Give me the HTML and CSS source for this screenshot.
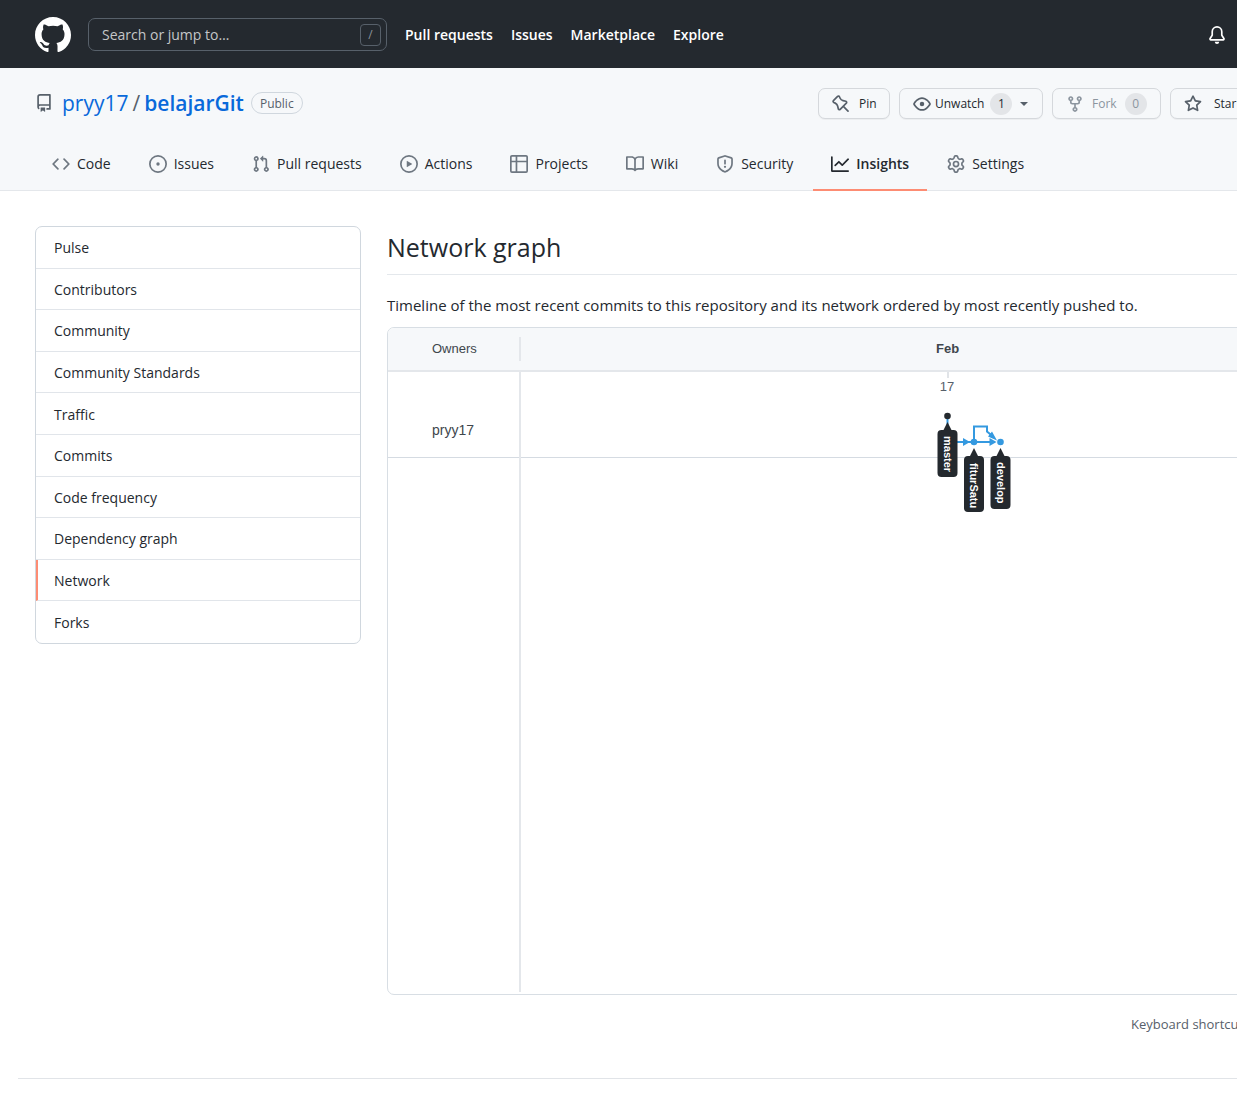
FILE: index.html
```html
<!DOCTYPE html>
<html lang="en">
<head>
<meta charset="utf-8">
<title>Network Graph · pryy17/belajarGit</title>
<link rel="stylesheet" href="styles.css">
</head>
<body>
<div class="app">
  <header class="topbar">
    <a class="logo" href="#" aria-label="Homepage"><svg width="36" height="36" viewBox="0 0 16 16"><path d="M8 0C3.58 0 0 3.58 0 8c0 3.54 2.29 6.53 5.47 7.59.4.07.55-.17.55-.38 0-.19-.01-.82-.01-1.49-2.01.37-2.53-.49-2.69-.94-.09-.23-.48-.94-.82-1.13-.28-.15-.68-.52-.01-.53.63-.01 1.08.58 1.23.82.72 1.21 1.87.87 2.33.66.07-.52.28-.87.51-1.07-1.78-.2-3.64-.89-3.64-3.95 0-.87.31-1.59.82-2.15-.08-.2-.36-1.02.08-2.12 0 0 .67-.21 2.2.82.64-.18 1.32-.27 2-.27.68 0 1.36.09 2 .27 1.53-1.04 2.2-.82 2.2-.82.44 1.1.16 1.92.08 2.12.51.56.82 1.27.82 2.15 0 3.07-1.87 3.75-3.65 3.95.29.25.54.73.54 1.48 0 1.07-.01 1.93-.01 2.2 0 .21.15.46.55.38A8.013 8.013 0 0016 8c0-4.42-3.58-8-8-8z"/></svg></a>
    <div class="search">
      <input type="text" placeholder="Search or jump to…" aria-label="Search or jump to">
      <kbd>/</kbd>
    </div>
    <nav class="topnav" aria-label="Global">
      <a href="#">Pull requests</a>
      <a href="#">Issues</a>
      <a href="#">Marketplace</a>
      <a href="#">Explore</a>
    </nav>
    <a class="bell" href="#" aria-label="Notifications"><svg width="18" height="18" viewBox="0 0 16 16"><path d="M8 16a2 2 0 001.985-1.75c.017-.137-.097-.25-.235-.25h-3.5c-.138 0-.252.113-.235.25A2 2 0 008 16z"/><path fill-rule="evenodd" d="M8 1.5A3.500 3.500 0 004.500 5v2.947c0 .346-.102.683-.294.970l-1.703 2.556a.018.018 0 00-.003.010l.001.006c0 .002.002.004.004.006a.017.017 0 00.006.004l.007.001h10.964l.007-.001a.016.016 0 00.006-.004.016.016 0 00.004-.006l.001-.007a.017.017 0 00-.003-.010l-1.703-2.554a1.750 1.750 0 01-.294-.970V5A3.500 3.500 0 008 1.500zM3 5a5 5 0 0110 0v2.947c0 .050.015.098.042.139l1.703 2.555A1.518 1.518 0 0113.482 13H2.518a1.518 1.518 0 01-1.263-2.360l1.703-2.554A.250.250 0 003 7.947V5z"/></svg></a>
  </header>

  <div class="repohead">
    <div class="titlerow">
      <h1 class="title">
        <svg width="18" height="18" viewBox="0 0 16 16"><path fill-rule="evenodd" d="M2 2.500A2.500 2.500 0 014.500 0h8.750a.750.750 0 01.750.750v12.500a.750.750 0 01-.750.750h-2.500a.750.750 0 110-1.500h1.750v-2h-8a1 1 0 00-.714 1.700.750.750 0 01-1.072 1.050A2.495 2.495 0 012 11.500v-9zm10.500-1V9h-8c-.356 0-.694.074-1 .208V2.500a1 1 0 011-1h8zM5 12.250v3.250a.250.250 0 00.400.200l1.450-1.087a.250.250 0 01.300 0L8.600 15.700a.250.250 0 00.400-.200v-3.250a.250.250 0 00-.250-.250h-3.500a.250.250 0 00-.250.250z"/></svg>
        <a href="#">pryy17</a><span class="slash">/</span><a class="repo" href="#">belajarGit</a>
        <span class="label">Public</span>
      </h1>
      <div class="actions">
        <button class="btn pin" type="button"><svg width="18" height="18" viewBox="0 0 16 16"><path fill-rule="evenodd" d="M4.456.734a1.750 1.750 0 012.826.504l.613 1.327a3.081 3.081 0 002.084 1.707l2.454.584c1.332.317 1.800 1.972.832 2.940L11.060 10l3.720 3.720a.750.750 0 11-1.061 1.060L10 11.060l-2.204 2.205c-.968.968-2.623.500-2.940-.832l-.584-2.454a3.081 3.081 0 00-1.707-2.084l-1.327-.613a1.750 1.750 0 01-.504-2.826L4.456.734zM5.920 1.866a.250.250 0 00-.404-.072L1.794 5.516a.250.250 0 00.072.404l1.328.613A4.582 4.582 0 015.730 9.630l.584 2.454a.250.250 0 00.420.120l5.470-5.470a.250.250 0 00-.120-.420L9.630 5.730a4.581 4.581 0 01-3.098-2.537L5.920 1.866z"/></svg>Pin</button>
        <button class="btn watch" type="button"><svg width="18" height="18" viewBox="0 0 16 16"><path fill-rule="evenodd" d="M1.679 7.932c.412-.621 1.242-1.750 2.366-2.717C5.175 4.242 6.527 3.500 8 3.500c1.473 0 2.824.742 3.955 1.715 1.124.967 1.954 2.096 2.366 2.717a.119.119 0 010 .136c-.412.621-1.242 1.750-2.366 2.717C10.825 11.758 9.473 12.500 8 12.500c-1.473 0-2.824-.742-3.955-1.715C2.920 9.818 2.090 8.690 1.679 8.068a.119.119 0 010-.136zM8 2c-1.981 0-3.670.992-4.933 2.078C1.797 5.169.880 6.423.430 7.100a1.619 1.619 0 000 1.798c.450.678 1.367 1.932 2.637 3.024C4.329 13.008 6.019 14 8 14c1.981 0 3.670-.992 4.933-2.078 1.270-1.091 2.187-2.345 2.637-3.023a1.619 1.619 0 000-1.798c-.450-.678-1.367-1.932-2.637-3.023C11.671 2.992 9.981 2 8 2zm0 8a2 2 0 100-4 2 2 0 000 4z"/></svg>Unwatch<span class="count">1</span><i class="caret"></i></button>
        <button class="btn fork" type="button" disabled><svg width="18" height="18" viewBox="0 0 16 16"><path fill-rule="evenodd" d="M5 3.250a.750.750 0 11-1.500 0 .750.750 0 011.500 0zm0 2.122a2.250 2.250 0 10-1.500 0v.878A2.250 2.250 0 005.750 8.500h1.500v2.128a2.251 2.251 0 101.500 0V8.500h1.500a2.250 2.250 0 002.250-2.250v-.878a2.250 2.250 0 10-1.500 0v.878a.750.750 0 01-.750.750h-4.500A.750.750 0 015 6.250v-.878zm3.750 7.378a.750.750 0 11-1.500 0 .750.750 0 011.500 0zm3-8.750a.750.750 0 100-1.500.750.750 0 000 1.500z"/></svg>Fork<span class="count">0</span></button>
        <button class="btn star" type="button"><svg width="18" height="18" viewBox="0 0 16 16"><path fill-rule="evenodd" d="M8 .250a.750.750 0 01.673.418l1.882 3.815 4.210.612a.750.750 0 01.416 1.279l-3.046 2.970.719 4.192a.750.750 0 01-1.088.791L8 12.347l-3.766 1.980a.750.750 0 01-1.088-.790l.720-4.194L.818 6.374a.750.750 0 01.416-1.280l4.210-.611L7.327.668A.750.750 0 018 .250zm0 2.445L6.615 5.500a.750.750 0 01-.564.410l-3.097.450 2.240 2.184a.750.750 0 01.216.664l-.528 3.084 2.769-1.456a.750.750 0 01.698 0l2.770 1.456-.530-3.084a.750.750 0 01.216-.664l2.240-2.183-3.096-.450a.750.750 0 01-.564-.410L8 2.694v.001z"/></svg>Star</button>
      </div>
    </div>
    <nav class="tabs" aria-label="Repository">
      <a href="#"><svg width="18" height="18" viewBox="0 0 16 16"><path fill-rule="evenodd" d="M4.720 3.220a.750.750 0 011.060 1.060L2.060 8l3.720 3.720a.750.750 0 11-1.060 1.060L.470 8.530a.750.750 0 010-1.060l4.250-4.250zm6.560 0a.750.750 0 10-1.060 1.060L13.940 8l-3.720 3.720a.750.750 0 101.060 1.060l4.250-4.250a.750.750 0 000-1.060l-4.250-4.250z"/></svg>Code</a>
      <a href="#"><svg width="18" height="18" viewBox="0 0 16 16"><path d="M8 9.500a1.500 1.500 0 100-3 1.500 1.500 0 000 3z"/><path fill-rule="evenodd" d="M8 0a8 8 0 100 16A8 8 0 008 0zM1.500 8a6.500 6.500 0 1113 0 6.500 6.500 0 01-13 0z"/></svg>Issues</a>
      <a href="#"><svg width="18" height="18" viewBox="0 0 16 16"><path fill-rule="evenodd" d="M7.177 3.073L9.573.677A.250.250 0 0110 .854v4.792a.250.250 0 01-.427.177L7.177 3.427a.250.250 0 010-.354zM3.750 2.500a.750.750 0 100 1.500.750.750 0 000-1.500zm-2.250.750a2.250 2.250 0 113 2.122v5.256a2.251 2.251 0 11-1.500 0V5.372A2.250 2.250 0 011.500 3.250zM11 2.500h-1V4h1a1 1 0 011 1v5.628a2.251 2.251 0 101.500 0V5A2.500 2.500 0 0011 2.500zm1 10.250a.750.750 0 111.500 0 .750.750 0 01-1.500 0zM3.750 12a.750.750 0 100 1.500.750.750 0 000-1.500z"/></svg>Pull requests</a>
      <a href="#"><svg width="18" height="18" viewBox="0 0 16 16"><path fill-rule="evenodd" d="M1.500 8a6.500 6.500 0 1113 0 6.500 6.500 0 01-13 0zM8 0a8 8 0 100 16A8 8 0 008 0zM6.379 5.227A.250.250 0 006 5.442v5.117a.250.250 0 00.379.214l4.264-2.559a.250.250 0 000-.428L6.379 5.227z"/></svg>Actions</a>
      <a href="#"><svg width="18" height="18" viewBox="0 0 16 16"><path fill-rule="evenodd" d="M0 1.750C0 .784.784 0 1.750 0h12.500C15.216 0 16 .784 16 1.750v12.500A1.750 1.750 0 0114.250 16H1.750A1.750 1.750 0 010 14.250V1.750zM1.500 6.500v7.750c0 .138.112.250.250.250H5v-8H1.500zM5 5H1.500V1.750a.250.250 0 01.250-.250H5V5zm1.500 1.500v8h7.750a.250.250 0 00.250-.250V6.500h-8zm8-1.500h-8V1.500h7.750a.250.250 0 01.250.250V5z"/></svg>Projects</a>
      <a href="#"><svg width="18" height="18" viewBox="0 0 16 16"><path fill-rule="evenodd" d="M0 1.750A.750.750 0 01.750 1h4.253c1.227 0 2.317.590 3 1.501A3.744 3.744 0 0111.006 1h4.245a.750.750 0 01.750.750v10.500a.750.750 0 01-.750.750h-4.507a2.250 2.250 0 00-1.591.659l-.622.621a.750.750 0 01-1.060 0l-.622-.621A2.250 2.250 0 005.258 13H.750a.750.750 0 01-.750-.750V1.750zm8.755 3a2.250 2.250 0 012.250-2.250H14.500v9h-3.757c-.710 0-1.400.201-1.992.572l.004-7.322zm-1.504 7.324l.004-5.073-.002-2.253A2.250 2.250 0 005.003 2.500H1.500v9h3.757a3.750 3.750 0 011.994.574z"/></svg>Wiki</a>
      <a href="#"><svg width="18" height="18" viewBox="0 0 16 16"><path fill-rule="evenodd" d="M7.467.133a1.750 1.750 0 011.066 0l5.250 1.680A1.750 1.750 0 0115 3.480V7c0 1.566-.320 3.182-1.303 4.682-.983 1.498-2.585 2.813-5.032 3.855a1.700 1.700 0 01-1.330 0c-2.447-1.042-4.049-2.357-5.032-3.855C1.320 10.182 1 8.566 1 7V3.480a1.750 1.750 0 011.217-1.667l5.250-1.680zm.610 1.429a.250.250 0 00-.153 0l-5.250 1.680a.250.250 0 00-.174.238V7c0 1.358.275 2.666 1.057 3.860.784 1.194 2.121 2.340 4.366 3.297a.200.200 0 00.154 0c2.245-.956 3.582-2.104 4.366-3.298C13.225 9.666 13.500 8.360 13.500 7V3.480a.250.250 0 00-.174-.237l-5.250-1.680zM9 10.500a1 1 0 11-2 0 1 1 0 012 0zm-.250-5.750a.750.750 0 10-1.500 0v3a.750.750 0 001.500 0v-3z"/></svg>Security</a>
      <a class="current" href="#" aria-current="page"><svg width="18" height="18" viewBox="0 0 16 16"><path fill-rule="evenodd" d="M1.500 1.750a.750.750 0 00-1.500 0v12.500c0 .414.336.750.750.750h14.500a.750.750 0 000-1.500H1.500V1.750zm14.280 2.530a.750.750 0 00-1.060-1.060L10 7.940 7.530 5.470a.750.750 0 00-1.060 0L3.220 8.720a.750.750 0 001.060 1.060L7 7.060l2.470 2.470a.750.750 0 001.060 0l5.250-5.250z"/></svg>Insights</a>
      <a href="#"><svg width="18" height="18" viewBox="0 0 16 16"><path fill-rule="evenodd" d="M7.429 1.525a6.593 6.593 0 011.142 0c.036.003.108.036.137.146l.289 1.105c.147.560.550.967.997 1.189.174.086.341.183.501.290.417.278.970.423 1.530.270l1.102-.303c.110-.030.175.016.195.046.219.310.410.641.573.989.014.031.022.110-.059.190l-.815.806c-.411.406-.562.957-.530 1.456a4.588 4.588 0 010 .582c-.032.499.119 1.050.530 1.456l.815.806c.080.080.073.159.059.190a6.494 6.494 0 01-.573.990c-.020.029-.086.074-.195.045l-1.103-.303c-.559-.153-1.112-.008-1.529.270-.160.107-.327.204-.500.290-.449.222-.851.628-.998 1.189l-.289 1.105c-.029.110-.101.143-.137.146a6.613 6.613 0 01-1.142 0c-.036-.003-.108-.037-.137-.146l-.289-1.105c-.147-.560-.550-.967-.997-1.189a4.502 4.502 0 01-.501-.290c-.417-.278-.970-.423-1.530-.270l-1.102.303c-.110.030-.175-.016-.195-.046a6.492 6.492 0 01-.573-.989c-.014-.031-.022-.110.059-.190l.815-.806c.411-.406.562-.957.530-1.456a4.587 4.587 0 010-.582c.032-.499-.119-1.050-.530-1.456l-.815-.806c-.080-.080-.073-.159-.059-.190a6.440 6.440 0 01.573-.990c.020-.029.086-.075.195-.045l1.103.303c.559.153 1.112.008 1.529-.270.160-.107.327-.204.500-.290.449-.222.851-.628.998-1.189l.289-1.105c.029-.110.101-.143.137-.146zM8 0c-.236 0-.470.010-.701.030-.743.065-1.290.615-1.458 1.261l-.290 1.106c-.017.066-.078.158-.211.224a5.994 5.994 0 00-.668.386c-.123.082-.233.090-.300.071L3.270 2.776c-.644-.177-1.392.020-1.820.630a7.977 7.977 0 00-.704 1.217c-.315.675-.111 1.422.363 1.891l.815.806c.050.048.098.147.088.294a6.084 6.084 0 000 .772c.010.147-.038.246-.088.294l-.815.806c-.474.469-.678 1.216-.363 1.891.200.428.436.835.704 1.218.428.609 1.176.806 1.820.630l1.103-.303c.066-.019.176-.011.299.071.213.143.436.272.668.386.133.066.194.158.212.224l.289 1.106c.169.646.715 1.196 1.458 1.260a8.094 8.094 0 001.402 0c.743-.064 1.290-.614 1.458-1.260l.290-1.106c.017-.066.078-.158.211-.224a5.980 5.980 0 00.668-.386c.123-.082.233-.090.300-.071l1.102.302c.644.177 1.392-.020 1.820-.630.268-.382.505-.789.704-1.217.315-.675.111-1.422-.364-1.891l-.814-.806c-.050-.048-.098-.147-.088-.294a6.100 6.100 0 000-.772c-.010-.147.039-.246.088-.294l.814-.806c.475-.469.679-1.216.364-1.891a7.992 7.992 0 00-.704-1.218c-.428-.609-1.176-.806-1.820-.630l-1.103.303c-.066.019-.176.011-.299-.071a5.991 5.991 0 00-.668-.386c-.133-.066-.194-.158-.212-.224L10.160 1.290C9.990.645 9.444.095 8.701.031A8.094 8.094 0 008 0zm1.500 8a1.500 1.500 0 11-3 0 1.500 1.500 0 013 0zM11 8a3 3 0 11-6 0 3 3 0 016 0z"/></svg>Settings</a>
    </nav>
  </div>

  <div class="content">
    <nav class="menu" aria-label="Insights">
      <a href="#">Pulse</a>
      <a href="#">Contributors</a>
      <a href="#">Community</a>
      <a href="#">Community Standards</a>
      <a href="#">Traffic</a>
      <a href="#">Commits</a>
      <a href="#">Code frequency</a>
      <a href="#">Dependency graph</a>
      <a class="selected" href="#" aria-current="page">Network</a>
      <a href="#">Forks</a>
    </nav>
    <main class="main">
      <h2>Network graph</h2>
      <p class="intro">Timeline of the most recent commits to this repository and its network ordered by most recently pushed to.</p>
      <div class="graph">
        <div class="graphhead">
          <span class="owners">Owners</span>
          <span class="month">Feb</span>
        </div>
        <div class="graphbody">
          <div class="ownercol"><div class="owner">pryy17</div></div>
          <div class="canvas">
            <div class="lane">
            <svg class="network" width="110" height="150" viewBox="0 0 110 150" role="img" aria-label="Commits and branches">
              <path d="M38 0v6" stroke="#e1e4e8" stroke-width="2"/>
              <text class="day" x="37" y="19">17</text>
              <g fill="none" stroke="#3499e0" stroke-width="2">
                <path d="M37.500 44v26H64h18M64 70V54.500h13v5l6 5"/>
              </g>
              <g fill="#3499e0">
                <path d="M53 66l7 4-7 4zM79.500 66l7 4-7 4zM78 64.500l9 4-5-9z"/>
                <circle cx="64" cy="70" r="3.300"/>
                <circle cx="90.500" cy="70" r="3.300"/>
              </g>
              <circle cx="37.500" cy="44" r="3.300" fill="#24292e"/>
              <g fill="#24292e">
                <path d="M37.500 50l4 8h2a4 4 0 014 4v39a4 4 0 01-4 4h-12a4 4 0 01-4-4V62a4 4 0 014-4h2z"/>
                <path d="M64 76l4 8h2a4 4 0 014 4v48a4 4 0 01-4 4H58a4 4 0 01-4-4V88a4 4 0 014-4h2z"/>
                <path d="M90.500 76l4 8h2a4 4 0 014 4v45a4 4 0 01-4 4h-12a4 4 0 01-4-4V88a4 4 0 014-4h2z"/>
              </g>
              <g class="branch">
                <text transform="translate(34 64) rotate(90)">master</text>
                <text transform="translate(60 91) rotate(90)">fiturSatu</text>
                <text transform="translate(87 90) rotate(90)">develop</text>
              </g>
            </svg>
            </div>
          </div>
        </div>
      </div>
      <p class="hint">Keyboard shortcuts available</p>
    </main>
  </div>
  <footer class="footer"></footer>
</div>
</body>
</html>
```
FILE: styles.css
```css
* { box-sizing: border-box; }
body {
  margin: 0;
  overflow-x: hidden;
  background: #fff;
  color: #24292f;
  font: 14px/24px "Open Sans", "Noto Sans", sans-serif;
}
a { color: inherit; text-decoration: none; }
svg { flex: none; fill: currentColor; }

/* The layout is wider than the viewport and is clipped on the right. */
.app { width: calc(100% + 118px); }

.topbar {
  display: flex;
  align-items: center;
  height: 68px;
  padding: 1px 129px 0 35px;
  background: #24292f;
  color: #fff;
}
.logo { display: flex; margin-right: 17px; }
.search { display: flex; align-items: center; width: 299px; height: 33px; padding: 0 5px 0 13px; border: 1px solid #57606a; border-radius: 7px; }
.search input { flex: 1; min-width: 0; padding: 0; border: 0; outline: 0; background: none; color: #fff; font: inherit; }
.search input::placeholder { color: #c4c6c8; opacity: 1; }
.search kbd { width: 21px; height: 22px; border: 1px solid #57606a; border-radius: 4px; color: #8b9198; font: 12px/20px "Open Sans", sans-serif; text-align: center; }
.topnav { display: flex; gap: 18px; margin-left: 18px; font-weight: 600; }
.bell { display: flex; margin-left: auto; }

.repohead { padding-top: 20px; border-bottom: 1px solid #e4e7eb; background: #f6f8fa; }
.titlerow { display: flex; justify-content: space-between; padding: 0 34px 0 35px; }
.title { display: flex; align-items: center; margin: 0; height: 30px; font-size: 21px; font-weight: 400; color: #57606a; }
.title svg { margin-right: 9px; }
.title a { color: #0969da; }
.title .repo { font-weight: 600; }
.slash { margin: 0 4px; }
.label { margin-left: 7px; height: 22px; padding: 0 8px; border: 1px solid #d0d7de; border-radius: 11px; font-size: 12px; line-height: 21px; }
.actions { display: flex; gap: 9px; }
.btn { display: flex; align-items: center; height: 31px; padding: 0 13px; border: 1px solid #d5d8dc; border-radius: 7px; background: #f6f8fa; color: #24292f; font: 12px/20px "Open Sans", sans-serif; box-shadow: 0 1px 0 #eceef0; white-space: nowrap; }
.btn svg { color: #57606a; }
.pin { width: 72px; gap: 9px; }
.watch { width: 144px; gap: 4px; }
.fork { width: 109px; gap: 8px; color: #8c959f; }
.fork svg { color: #8c959f; }
.star { width: 151px; gap: 12px; }
.count { min-width: 22px; height: 22px; border-radius: 11px; background: #e3e5e8; line-height: 22px; text-align: center; }
.watch .count { margin-left: 2px; }
.caret { margin-left: 4px; border: 4px solid transparent; border-top-color: #57606a; border-bottom: 0; }

.tabs { display: flex; padding: 18px 34px 0; gap: 2px; }
.tabs a { display: flex; align-items: center; gap: 7px; height: 54px; margin-bottom: -1px; padding: 1px 18px 0; border-bottom: 2px solid transparent; }
.tabs svg { color: #6e7781; }
.tabs .current { border-color: #fd8c73; font-weight: 600; }
.tabs .current svg { color: #24292f; }

.content { display: grid; grid-template-columns: 326px 1fr; gap: 26px; padding: 35px 35px 0; }
.menu { display: grid; grid-auto-rows: 1fr; align-self: start; height: 418px; overflow: hidden; border: 1px solid #d0d7de; border-radius: 7px; }
.menu a { display: flex; align-items: center; padding: 2px 18px 0; border-bottom: 1px solid #e1e5ea; }
.menu a:last-child { border-bottom: 0; }
.menu .selected { padding-left: 16px; border-left: 2px solid #fd8c73; }

.main h2 { margin: 0; padding-bottom: 6px; border-bottom: 1px solid #e4e8ec; font-size: 25px; font-weight: 400; line-height: 42px; }
.intro { margin: 18px 0 10px; font-size: 15px; }
.graph { border: 1px solid #d8dee4; border-radius: 7px; overflow: hidden; font-family: "Liberation Sans", sans-serif; font-size: 13px; color: #40464c; }
.graphhead { display: grid; grid-template-columns: 133px 1fr; align-items: center; height: 44px; border-bottom: 2px solid #e4e7eb; background: #f6f8fa; }
.owners { padding-left: 44px; border-right: 2px solid #e4e7eb; }
.month { padding-left: 415px; font-weight: 700; }
.graphbody { display: grid; grid-template-columns: 133px 1fr; height: 622px; padding-bottom: 2px; }
.ownercol { border-right: 2px solid #e4e7eb; }
.owner { height: 86px; padding: 46px 0 0 44px; border-bottom: 1px solid #d5dbe2; font-size: 14px; }
.lane { height: 86px; padding-left: 389px; border-bottom: 1px solid #d5dbe2; }
.network { display: block; }
.day { fill: #57606a; font-size: 13px; text-anchor: middle; }
.branch { fill: #fff; font-size: 11px; font-weight: 700; }
.hint { margin: 17px 0 0; padding-right: 14px; font-size: 13px; text-align: right; color: #57606a; }
.footer { margin: 42px 18px 0; border-top: 1px solid #e1e4e8; }
```
